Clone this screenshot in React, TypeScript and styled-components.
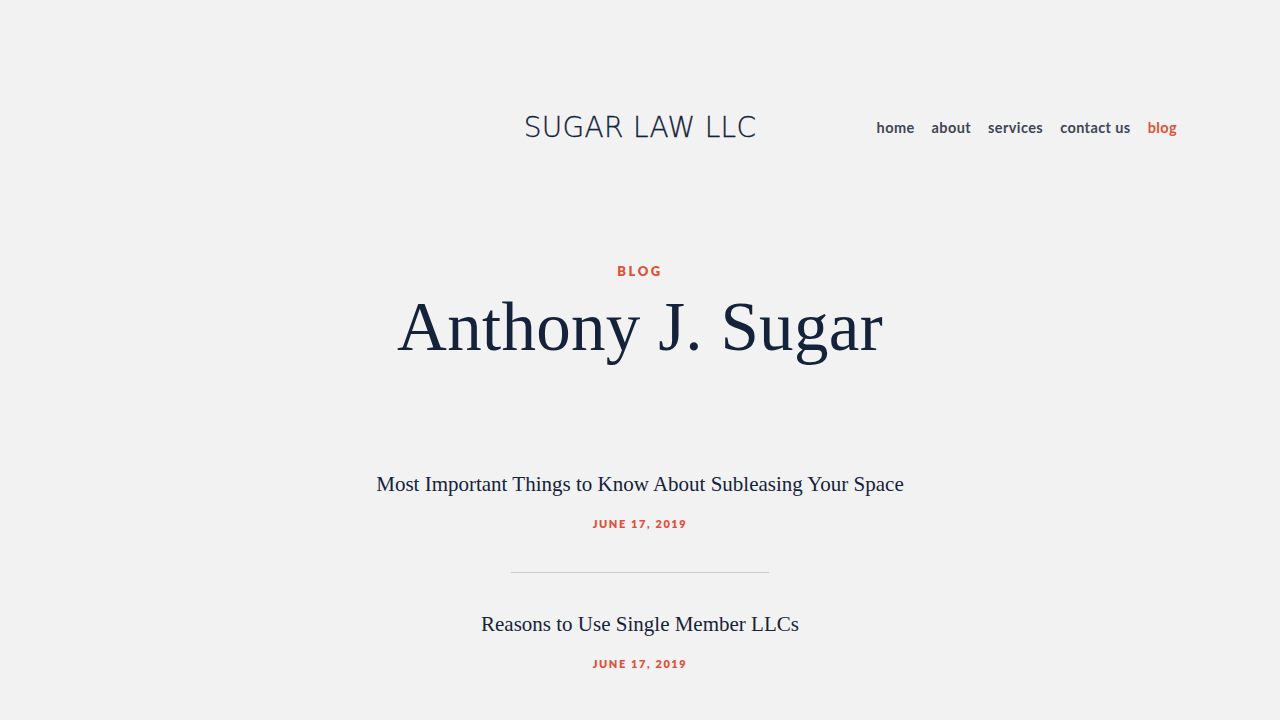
import styled, { createGlobalStyle } from "styled-components";

const GlobalStyle = createGlobalStyle`
  html, body {
    margin: 0;
    padding: 0;
    background: #f2f2f2;
  }
  body {
    font-family: "Liberation Serif", serif;
    color: #14233a;
  }
`;

const red = "#e0513a";
const navy = "#14233a";

const Page = styled.div`
  min-height: 720px;
  background: #f2f2f2;
`;

const Header = styled.header`
  position: relative;
  display: flex;
  justify-content: center;
  align-items: center;
  height: 90px;
  padding-top: 82px;
`;

const Logo = styled.div`
  font-family: "DejaVu Sans", sans-serif;
  font-weight: 300;
  font-size: 28px;
  letter-spacing: 0.3px;
  color: ${navy};
  -webkit-text-stroke: 0.3px ${navy};
`;

const Nav = styled.nav`
  position: absolute;
  right: 103px;
  top: 82px;
  height: 90px;
  display: flex;
  align-items: center;
  gap: 17px;
`;

const NavLink = styled.a<{ active?: boolean }>`
  font-family: "Lato", sans-serif;
  font-size: 14.5px;
  font-weight: 700;
  letter-spacing: 0.4px;
  color: ${({ active }) => (active ? red : "#3f4656")};
  text-decoration: none;
`;

const Hero = styled.section`
  display: flex;
  flex-direction: column;
  align-items: center;
  padding-top: 91px;
`;

const Eyebrow = styled.div`
  font-family: "Lato", sans-serif;
  font-weight: 800;
  font-size: 13px;
  letter-spacing: 2.5px;
  color: ${red};
`;

const Title = styled.h1`
  margin: 0;
  font-family: "Liberation Serif", serif;
  font-weight: 400;
  font-size: 69px;
  line-height: 96px;
  color: ${navy};
  letter-spacing: 0.3px;
`;

const Posts = styled.section`
  display: flex;
  flex-direction: column;
  align-items: center;
  padding-top: 96px;
`;

const PostItem = styled.div`
  display: flex;
  flex-direction: column;
  align-items: center;
`;

const Post = styled.article`
  display: flex;
  flex-direction: column;
  align-items: center;
  gap: 20px;
`;

const PostTitle = styled.a`
  font-family: "Liberation Serif", serif;
  font-size: 21px;
  line-height: 26px;
  color: ${navy};
  text-decoration: none;
`;

const PostDate = styled.div`
  font-family: "Lato", sans-serif;
  font-weight: 800;
  font-size: 11px;
  letter-spacing: 1.6px;
  color: ${red};
`;

const Divider = styled.hr`
  width: 258px;
  border: none;
  border-top: 1px solid #c9c9c9;
  margin: 42px 0 38px;
`;

const posts = [
  { title: "Most Important Things to Know About Subleasing Your Space", date: "JUNE 17, 2019" },
  { title: "Reasons to Use Single Member LLCs", date: "JUNE 17, 2019" },
];

export default function App() {
  return (
    <Page>
      <GlobalStyle />
      <Header>
        <Logo>SUGAR LAW LLC</Logo>
        <Nav>
          <NavLink href="#">home</NavLink>
          <NavLink href="#">about</NavLink>
          <NavLink href="#">services</NavLink>
          <NavLink href="#">contact us</NavLink>
          <NavLink href="#" active>blog</NavLink>
        </Nav>
      </Header>
      <Hero>
        <Eyebrow>BLOG</Eyebrow>
        <Title>Anthony J. Sugar</Title>
      </Hero>
      <Posts>
        {posts.map((p, i) => (
          <PostItem key={p.title}>
            {i > 0 && <Divider />}
            <Post>
              <PostTitle href="#">{p.title}</PostTitle>
              <PostDate>{p.date}</PostDate>
            </Post>
          </PostItem>
        ))}
      </Posts>
    </Page>
  );
}
